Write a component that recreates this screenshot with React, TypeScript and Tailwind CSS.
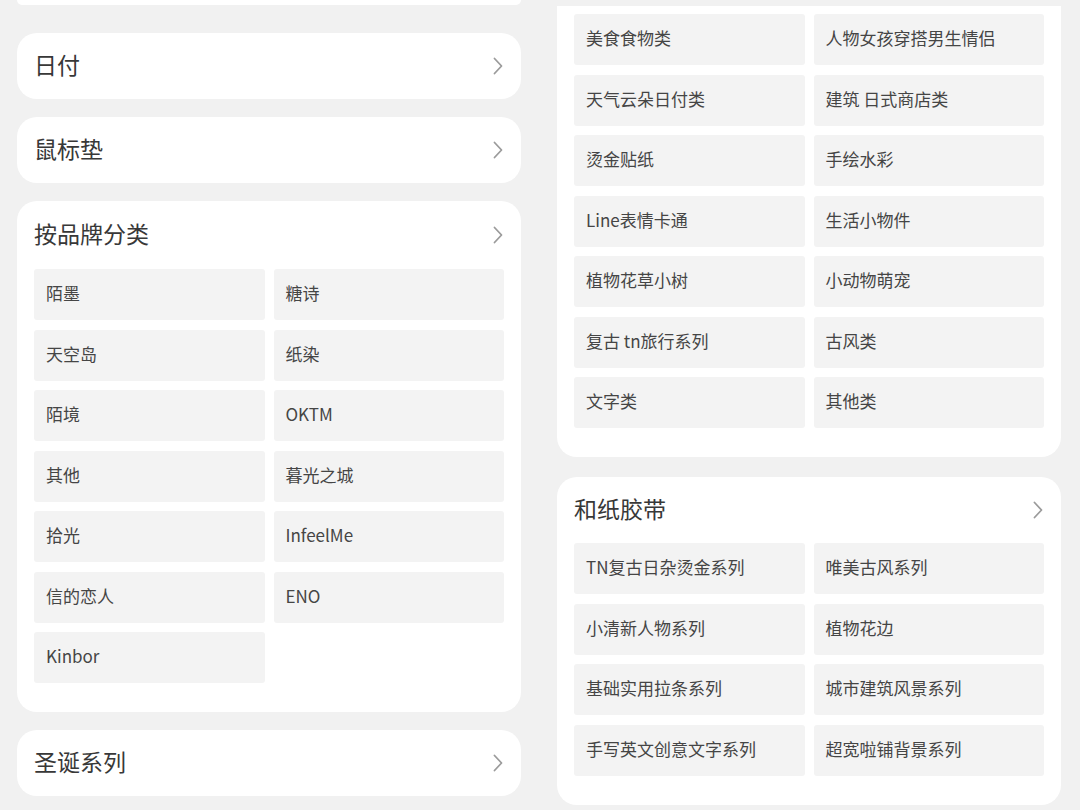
import React from "react";

const font = { fontFamily: '"Noto Sans CJK SC", "Noto Sans", sans-serif' };

function Chevron() {
  return (
    <svg width="10" height="18" viewBox="0 0 10 18" className="shrink-0">
      <polyline points="1.5,1.5 8.5,9 1.5,16.5" fill="none" stroke="#9b9b9b" strokeWidth="1.8" strokeLinecap="round" strokeLinejoin="round" />
    </svg>
  );
}

function Header({ title, h = "h-[66px]" }: { title: string; h?: string }) {
  return (
    <div className={`flex items-center justify-between pl-[17px] pr-[18px] ${h}`}>
      <span className="text-[23px] text-[#383838] leading-none pb-[4px]">{title}</span>
      <Chevron />
    </div>
  );
}

function RowCard({ title }: { title: string }) {
  return (
    <div className="bg-white rounded-[20px]">
      <Header title={title} />
    </div>
  );
}

function Grid({ items }: { items: string[] }) {
  return (
    <div className="grid grid-cols-2 gap-x-[9px] gap-y-[9.5px] px-[17px]">
      {items.map((t) => (
        <div key={t} className="h-[51px] bg-[#f3f3f3] rounded-[3px] flex items-center pl-[12px] pb-[3px] text-[17px] text-[#454545]">
          {t}
        </div>
      ))}
    </div>
  );
}

const brands = ["陌墨", "糖诗", "天空岛", "纸染", "陌境", "OKTM", "其他", "暮光之城", "拾光", "InfeelMe", "信的恋人", "ENO", "Kinbor"];
const themes = ["美食食物类", "人物女孩穿搭男生情侣", "天气云朵日付类", "建筑 日式商店类", "烫金贴纸", "手绘水彩", "Line表情卡通", "生活小物件", "植物花草小树", "小动物萌宠", "复古 tn旅行系列", "古风类", "文字类", "其他类"];
const tapes = ["TN复古日杂烫金系列", "唯美古风系列", "小清新人物系列", "植物花边", "基础实用拉条系列", "城市建筑风景系列", "手写英文创意文字系列", "超宽啦铺背景系列"];

export default function App() {
  return (
    <div className="w-[1080px] h-[810px] overflow-hidden bg-[#f1f1f1] flex gap-[36px] pl-[17px]" style={font}>
      <div className="w-[504px] flex flex-col">
        <div className="h-[5px] bg-white rounded-b-[20px]" />
        <div className="mt-[28px] flex flex-col gap-[18px]">
          <RowCard title="日付" />
          <RowCard title="鼠标垫" />
          <div className="bg-white rounded-[20px] pb-[29px]">
            <Header title="按品牌分类" h="h-[68px]" />
            <Grid items={brands} />
          </div>
          <RowCard title="圣诞系列" />
        </div>
      </div>
      <div className="w-[504px] flex flex-col pt-[6px] gap-[20px]">
        <div className="bg-white rounded-b-[20px] pt-[8px] pb-[29px]">
          <Grid items={themes} />
        </div>
        <div className="bg-white rounded-[20px] pb-[29px]">
          <Header title="和纸胶带" h="h-[66px]" />
          <Grid items={tapes} />
        </div>
      </div>
    </div>
  );
}
